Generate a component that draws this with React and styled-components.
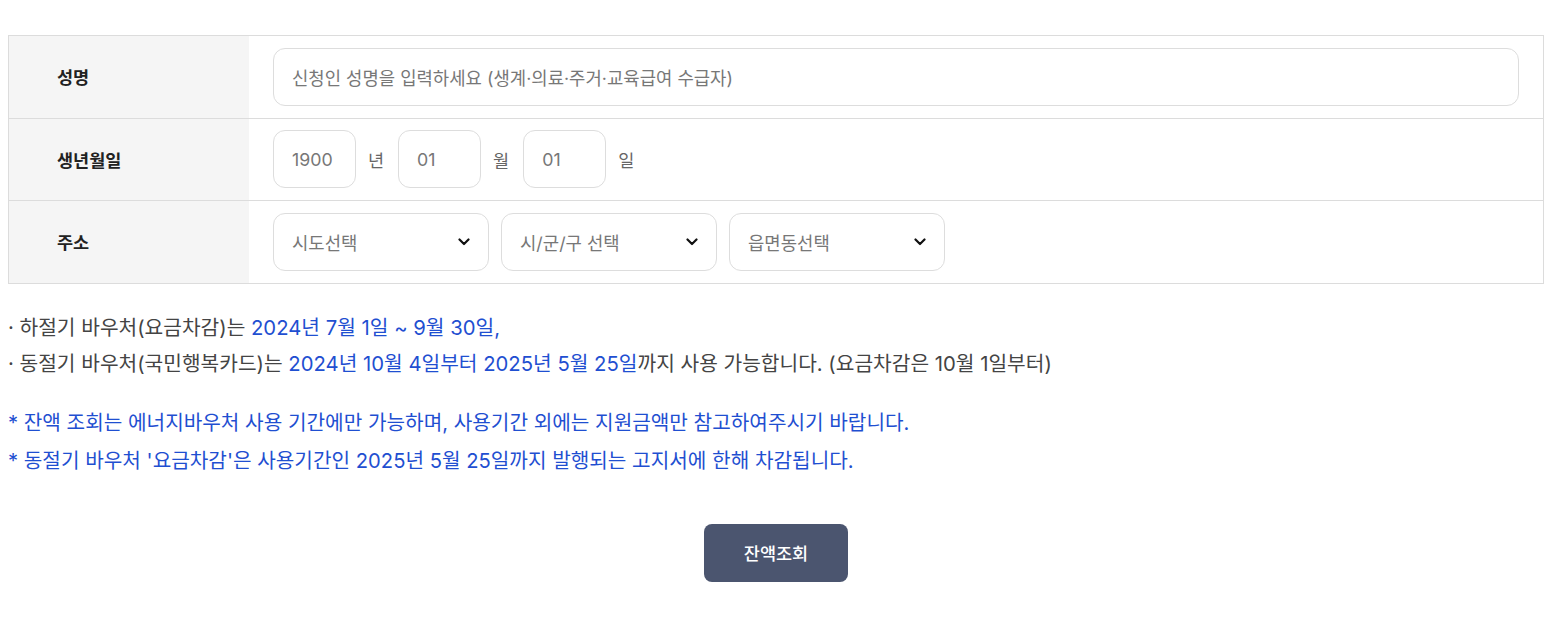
import styled, { createGlobalStyle } from "styled-components";

const GlobalStyle = createGlobalStyle`
    body {
        margin: 0;
        padding: 35px 17px 0 8px;
        font-family: Inter, "Noto Sans CJK KR", sans-serif;
        color: #333;
        background: #fff;
    }
`;

const Table = styled.div`
    display: grid;
    grid-template-columns: 240px 1fr;
    border: 1px solid #dcdcdc;
    border-bottom: none;
`;

const Label = styled.div`
    box-sizing: border-box;
    display: flex;
    align-items: center;
    padding-left: 48px;
    height: 82.5px;
    background: #f5f5f5;
    border-bottom: 1px solid #dcdcdc;
    font-size: 17.5px;
    font-weight: 700;
    color: #222;
`;

const Cell = styled.div`
    box-sizing: border-box;
    display: flex;
    align-items: center;
    gap: 12px;
    padding: 0 24px;
    height: 82.5px;
    border-bottom: 1px solid #dcdcdc;
`;

const Field = styled.div`
    box-sizing: border-box;
    display: flex;
    align-items: center;
    justify-content: space-between;
    height: 58px;
    width: ${(p) => p.$w || "auto"};
    flex: ${(p) => (p.$grow ? 1 : "none")};
    padding: 0 18px;
    border: 1px solid #dddddd;
    border-radius: 12px;
    font-size: 17.8px;
    color: #777;
`;

const Unit = styled.span`
    font-size: 17.5px;
    color: #666;
    margin-right: 2px;
`;

const Notes = styled.div`
    margin-top: 26px;
    font-size: 20.3px;
    line-height: 36px;
    color: #444;
`;

const Warn = styled.div`
    margin-top: 22px;
    font-size: 20.2px;
    line-height: 38px;
    color: #1f4fd1;
`;

const Blue = styled.span`
    color: #1f4fd1;
`;

const Actions = styled.div`
    display: flex;
    justify-content: center;
    margin-top: 44px;
`;

const Button = styled.button`
    width: 144px;
    height: 58px;
    border: none;
    border-radius: 8px;
    background: #4b556f;
    color: #fff;
    font-family: inherit;
    font-size: 17.5px;
    font-weight: 500;
`;

const Chevron = () => (
    <svg width="12" height="8" viewBox="0 0 12 8">
        <path d="M1.5 1.5 L6 6 L10.5 1.5" fill="none" stroke="#111" strokeWidth="2.2" strokeLinecap="round" strokeLinejoin="round" />
    </svg>
);

const App = () => {
    return (
        <>
            <GlobalStyle />
            <Table>
                <Label>성명</Label>
                <Cell>
                    <Field $grow>신청인 성명을 입력하세요 (생계·의료·주거·교육급여 수급자)</Field>
                </Cell>

                <Label>생년월일</Label>
                <Cell>
                    <Field $w="83px">1900</Field>
                    <Unit>년</Unit>
                    <Field $w="83px">01</Field>
                    <Unit>월</Unit>
                    <Field $w="83px">01</Field>
                    <Unit>일</Unit>
                </Cell>

                <Label>주소</Label>
                <Cell>
                    <Field $w="216px">
                        시도선택 <Chevron />
                    </Field>
                    <Field $w="216px">
                        시/군/구 선택 <Chevron />
                    </Field>
                    <Field $w="216px">
                        읍면동선택 <Chevron />
                    </Field>
                </Cell>
            </Table>

            <Notes>
                <div>
                    · 하절기 바우처(요금차감)는 <Blue>2024년 7월 1일 ~ 9월 30일,</Blue>
                </div>
                <div>
                    · 동절기 바우처(국민행복카드)는 <Blue>2024년 10월 4일부터 2025년 5월 25일</Blue>까지 사용 가능합니다. (요금차감은 10월 1일부터)
                </div>
            </Notes>

            <Warn>
                <div>* 잔액 조회는 에너지바우처 사용 기간에만 가능하며, 사용기간 외에는 지원금액만 참고하여주시기 바랍니다.</div>
                <div>* 동절기 바우처 '요금차감'은 사용기간인 2025년 5월 25일까지 발행되는 고지서에 한해 차감됩니다.</div>
            </Warn>

            <Actions>
                <Button>잔액조회</Button>
            </Actions>
        </>
    );
};

export default App;
